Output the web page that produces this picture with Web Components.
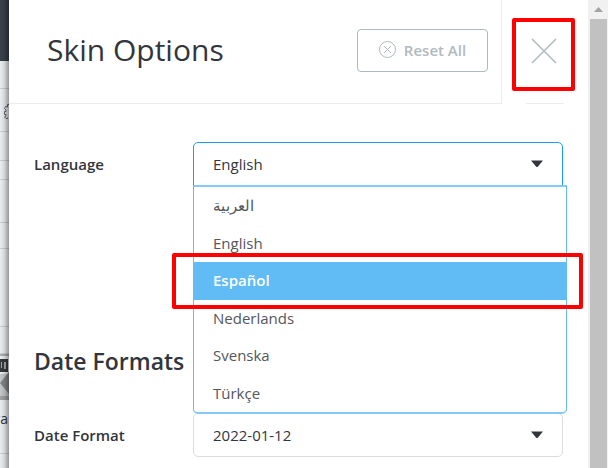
<!DOCTYPE html>
<html lang="en">
<head>
<meta charset="utf-8">
<title>Skin Options</title>
<style>
html, body { height: 100%; margin: 0; }
body { font-family: "Open Sans", "Noto Sans", sans-serif; font-size: 15px; color: #32363c; background: #fff; overflow: hidden; }
</style>
</head>
<body>
<skin-app></skin-app>
<script>
function define(name, html, setup) {
  const template = document.createElement('template');
  template.innerHTML = html;
  customElements.define(name, class extends HTMLElement {
    constructor() {
      super();
      this.attachShadow({ mode: 'open' }).append(template.content.cloneNode(true));
    }
    connectedCallback() { if (setup) setup(this, this.shadowRoot); }
  });
}

define('page-edge', `
<style>
:host { position: relative; display: flex; flex-direction: column; width: 9px; overflow: hidden; background: #eef1f4; }
:host::after { content: ""; position: absolute; inset: 0; background: linear-gradient(90deg, rgba(0,0,0,0.01), rgba(0,0,0,0.1) 45%, rgba(0,0,0,0.38)); }
div { box-sizing: border-box; flex: none; border-bottom: 1px solid #ccd1d4; }
.bar { height: 61px; background: #3a424b; border: 0; }
.h19 { height: 19px; } .h26 { height: 26px; } .h27 { height: 27px; } .h28 { height: 28px; } .h29 { height: 29px; } .h43 { height: 43px; } .h78 { height: 78px; }
.media { height: 48px; border: 0; }
.text { height: 52px; font-size: 14px; line-height: 34px; direction: rtl; white-space: nowrap; padding-right: 1px; }
svg { display: block; }
</style>
<div class="bar"></div><div class="h28"></div>
<div class="h43"><svg width="9" height="42" viewBox="0 0 9 42" fill="none" stroke="#62686c"><path d="M9 15.500H7.500V18L5.500 17.500L4.500 19.500L6 21V22.500H4.500V25.500H6V27L4.500 28L6 29.500H7.500V28.500"/></svg></div>
<div class="h29"></div><div class="h19"></div><div class="h43"></div><div class="h26"></div><div class="h78"></div><div class="h27"></div>
<div class="media"><svg width="9" height="48" viewBox="0 0 9 48"><path fill="#aeb1b3" d="M0 0h9v2H0z"/><path fill="#383b3e" d="M0 5h8v13H0z"/><path fill="#aaa" d="M1 8h1v6H1zM4 8h2v7H4z"/><path fill="#c7c9ca" d="M0 20h9v24H0z"/><path fill="#85888a" d="M9 18v22L0 29z"/><path fill="#a3a5a6" d="M0 42h9v4H0z"/></svg></div>
<div class="text">ra</div>
`);

define('scroll-rail', `
<style>
:host { display: flex; flex-direction: column; width: 20px; background: #f1f1f1; }
svg { display: block; flex: none; }
.thumb { flex: 1; margin: 0 1px 0 2px; background: #c1c1c1; }
</style>
<svg width="20" height="19" viewBox="0 0 20 19"><path fill="#a3a3a3" d="M10.500 7L15 12H6z"/></svg>
<div class="thumb"></div>
`);

define('reset-button', `
<style>
:host { display: block; }
button { display: flex; align-items: center; justify-content: center; gap: 8px; box-sizing: border-box; width: 131px; height: 43px; padding: 0 0 2px; border: 1px solid #aebabd; border-radius: 4px; background: #fff; color: #b1babf; font: 600 15px/20px "Open Sans", sans-serif; }
</style>
<button type="button"><svg width="17" height="17" viewBox="0 0 17 17" fill="none" stroke="#aebabd"><circle cx="8.500" cy="8.500" r="8"/><path d="M5 5l7 7M12 5l-7 7"/></svg><slot></slot></button>
`);

define('close-button', `
<style>
:host { position: relative; display: flex; align-items: center; justify-content: center; width: 86px; }
:host::before { content: ""; position: absolute; left: 10px; right: 13px; top: 18px; bottom: 13px; border: 4px solid #f00; border-radius: 2px; }
:host::after { content: ""; position: absolute; left: 24px; right: 24px; bottom: 0; border-bottom: 1px solid #ececee; }
button { position: relative; display: flex; padding: 8px; margin: 0 2px 2px 0; border: 0; background: none; }
</style>
<button type="button" aria-label="Close"><svg width="26" height="26" viewBox="0 0 26 26" fill="none" stroke="#aebabd" stroke-width="1.500"><path d="M1 1l24 24M25 1L1 25"/></svg></button>
`);

define('panel-header', `
<style>
:host { display: flex; height: 104px; flex: none; }
.title { flex: 1; display: flex; align-items: center; justify-content: space-between; box-sizing: border-box; padding: 0 13px 2px 38px; border-right: 1px solid #ececee; border-bottom: 1px solid #ececee; }
h1 { margin: 0; padding-bottom: 2px; font-size: 30px; line-height: 40px; font-weight: 400; color: #32363c; }
</style>
<div class="title"><h1><slot></slot></h1><reset-button>Reset All</reset-button></div>
<close-button></close-button>
`);

define('select-field', `
<style>
:host { display: grid; grid-template-columns: 159px 1fr; }
label { font-weight: 600; font-size: 15px; line-height: 20px; align-self: center; }
.control { position: relative; }
select { display: block; appearance: none; box-sizing: border-box; width: 100%; height: 44px; padding: 0 40px 0 19px; border: 1px solid #dcdcdf; border-radius: 5px; background: #fff; color: #32363c; font: 400 15px/20px "Open Sans", sans-serif; }
:host([open]) select { border-color: #1b9cf0; border-bottom-left-radius: 0; border-bottom-right-radius: 0; }
svg { position: absolute; right: 19px; top: 18px; pointer-events: none; }
</style>
<label for="field"></label>
<div class="control"><select id="field"><option></option></select>
<svg width="13" height="8" viewBox="0 0 13 8"><path fill="#32363c" d="M0 0.500h12L7 6.500q-1 1-2 0z"/></svg>
<slot></slot></div>
`, (el, root) => {
  root.querySelector('label').textContent = el.getAttribute('label');
  root.querySelector('option').textContent = el.getAttribute('value');
});

define('option-list', `
<style>
:host { position: absolute; z-index: 1; top: 43px; left: 0; right: -4px; display: flex; flex-direction: column; box-sizing: border-box; height: 229px; border: 1px solid #62bcf6; border-top: 2px solid #85cbfa; border-bottom: 2px solid #85cbfa; border-radius: 0 0 5px 5px; background: #fff; }
</style>
<slot></slot>
`, el => el.setAttribute('role', 'listbox'));

define('list-option', `
<style>
:host { position: relative; flex: 1; display: flex; align-items: center; padding: 0 19px 1px; color: #54575c; line-height: 20px; }
:host([active]) { background: #61bcf6; color: #fff; font-weight: 600; }
:host([active])::after { content: ""; position: absolute; inset: -9px -17px -9px -22px; border: 4px solid #f00; border-radius: 2px; }
</style>
<slot></slot>
`, el => el.setAttribute('role', 'option'));

define('options-body', `
<style>
:host { display: block; padding: 38px 25px 11px; }
h2 { margin: 159px 0 36px; font-size: 23px; line-height: 32px; font-weight: 600; }
</style>
<select-field label="Language" value="English" open>
  <option-list aria-label="Language">
    <list-option lang="ar">العربية</list-option>
    <list-option>English</list-option>
    <list-option active aria-selected="true" lang="es">Español</list-option>
    <list-option lang="nl">Nederlands</list-option>
    <list-option lang="sv">Svenska</list-option>
    <list-option lang="tr">Türkçe</list-option>
  </option-list>
</select-field>
<h2>Date Formats</h2>
<select-field label="Date Format" value="2022-01-12"></select-field>
`);

define('skin-app', `
<style>
:host { display: flex; height: 100%; }
main { flex: 1; min-width: 0; background: #fff; }
</style>
<page-edge></page-edge>
<main><panel-header>Skin Options</panel-header><options-body></options-body></main>
<scroll-rail></scroll-rail>
`);
</script>
</body>
</html>
